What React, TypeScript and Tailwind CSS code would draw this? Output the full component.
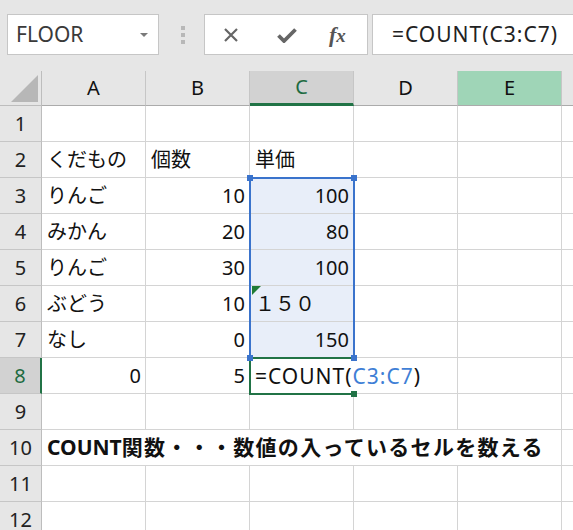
import React from "react";

const FONT = "font-['Noto_Sans','Noto_Sans_CJK_JP',sans-serif]";

type CellProps = {
  children?: React.ReactNode;
  right?: boolean;
  sel?: boolean;
  className?: string;
};

function Cell({ children, right, sel, className = "" }: CellProps) {
  return (
    <div
      className={`h-[36px] w-[104px] shrink-0 border-r border-b border-[#d4d4d4] flex items-center text-[20px] leading-[20px] text-[#111] ${
        right ? "justify-end pr-[4px]" : "justify-start pl-[5px]"
      } ${sel ? "bg-[#e8eef9]" : "bg-white"} ${className}`}
    >
      {children}
    </div>
  );
}

function RowHead({ n, active }: { n: number; active?: boolean }) {
  return (
    <div
      className={`h-[36px] w-[42px] shrink-0 border-b border-[#c6c6c6] flex items-center justify-center text-[20px] leading-[20px] ${
        active
          ? "bg-[#d2d2d2] text-[#1e6b41] border-r-[2px] border-r-[#217346]"
          : "bg-[#e6e6e6] text-[#222] border-r border-r-[#bdbdbd]"
      }`}
    >
      {n}
    </div>
  );
}

function Filler() {
  return <div className="h-[36px] flex-1 border-b border-[#d4d4d4] bg-white" />;
}

export default function App() {
  const dataRows: [string, string, string, boolean?][] = [
    ["りんご", "10", "100"],
    ["みかん", "20", "80"],
    ["りんご", "30", "100"],
    ["ぶどう", "10", "１５０", true],
    ["なし", "0", "150"],
  ];

  return (
    <div className={`relative w-[573px] h-[530px] overflow-hidden bg-white ${FONT}`}>
      {/* Formula bar area */}
      <div className="h-[71px] bg-[#e6e6e6] flex items-start pt-[14px] pl-[7px]">
        <div className="w-[152px] h-[41px] shrink-0 bg-white border border-[#c6c6c6] flex items-center pl-[8px] pr-[10px]">
          <span className="flex-1 text-[21px] text-[#3a3a3a] leading-none">FLOOR</span>
          <span className="w-0 h-0 border-l-[4px] border-r-[4px] border-t-[4px] border-l-transparent border-r-transparent border-t-[#7a7a7a]" />
        </div>
        <div className="w-[45px] h-[41px] shrink-0 flex flex-col items-center justify-center gap-[3px] pl-[2px]">
          <span className="w-[4px] h-[4px] bg-[#b8b8b8]" />
          <span className="w-[4px] h-[4px] bg-[#b8b8b8]" />
          <span className="w-[4px] h-[4px] bg-[#b8b8b8]" />
        </div>
        <div className="w-[164px] h-[41px] shrink-0 bg-white border border-[#c6c6c6] flex items-center pl-[18px]">
          <svg width="16" height="16" viewBox="0 0 16 16">
            <path d="M2 2 L14 14 M14 2 L2 14" stroke="#666" strokeWidth="2.2" fill="none" />
          </svg>
          <svg className="ml-[38px]" width="20" height="16" viewBox="0 0 20 16">
            <path d="M1.5 8.5 L7 14 L18.5 2.5" stroke="#666" strokeWidth="3.8" fill="none" strokeLinejoin="miter" />
          </svg>
          <span className="ml-[32px] font-['Liberation_Serif',serif] italic font-bold text-[22px] text-[#555] leading-none">
            f<span className="text-[19px]">x</span>
          </span>
        </div>
        <div className="ml-[4px] w-[220px] h-[41px] shrink-0 bg-white border border-[#c6c6c6] flex items-center pl-[19px]">
          <span className="text-[21px] tracking-[1px] text-[#222] leading-none whitespace-nowrap">=COUNT(C3:C7)</span>
        </div>
      </div>

      {/* Grid */}
      <div className="relative">
        {/* Column headers */}
        <div className="flex h-[35px]">
          <div className="w-[42px] h-[35px] shrink-0 bg-[#e6e6e6] border-r border-b border-[#bdbdbd] flex items-end justify-end pr-[3px] pb-[3px]">
            <svg width="27" height="27" viewBox="0 0 27 27">
              <path d="M27 0 L27 27 L0 27 Z" fill="#b7b7b7" />
            </svg>
          </div>
          {["A", "B", "C", "D", "E"].map((c) => (
            <div
              key={c}
              className={`w-[104px] h-[35px] shrink-0 border-r flex items-center justify-center text-[20px] leading-[20px] ${
                c === "C"
                  ? "bg-[#d2d2d2] border-r-[#c6c6c6] border-b-[3px] border-b-[#217346] text-[#1e6b41]"
                  : c === "E"
                  ? "bg-[#9fd5b7] border-r-[#c6c6c6] border-b border-b-[#ababab] text-[#111]"
                  : "bg-[#e6e6e6] border-r-[#c6c6c6] border-b border-b-[#ababab] text-[#111]"
              }`}
            >
              {c}
            </div>
          ))}
          <div className="flex-1 h-[35px] bg-[#e6e6e6] border-b border-[#ababab]" />
        </div>

        {/* Row 1 */}
        <div className="flex">
          <RowHead n={1} />
          <Cell />
          <Cell />
          <Cell />
          <Cell />
          <Cell />
          <Filler />
        </div>

        {/* Row 2 */}
        <div className="flex">
          <RowHead n={2} />
          <Cell>くだもの</Cell>
          <Cell>個数</Cell>
          <Cell>単価</Cell>
          <Cell />
          <Cell />
          <Filler />
        </div>

        {dataRows.map(([a, b, c, text], i) => (
          <div className="flex" key={i}>
            <RowHead n={i + 3} />
            <Cell>{a}</Cell>
            <Cell right>{b}</Cell>
            <Cell right={!text} sel className="relative">
              {text && (
                <svg className="absolute left-[2px] top-0" width="9" height="9" viewBox="0 0 9 9">
                  <path d="M0 0 L9 0 L0 9 Z" fill="#1f7a35" />
                </svg>
              )}
              {c}
            </Cell>
            <Cell />
            <Cell />
            <Filler />
          </div>
        ))}

        {/* Row 8 */}
        <div className="flex">
          <RowHead n={8} active />
          <Cell right>0</Cell>
          <Cell right>5</Cell>
          <div className="h-[36px] w-[104px] shrink-0 border-b border-[#d4d4d4] bg-white flex items-center pl-[5px] text-[21px] tracking-[1px] leading-[20px] whitespace-nowrap relative z-10">
            <span className="text-[#111]">=COUNT(</span>
            <span className="text-[#3f7fd6]">C3:C7</span>
            <span className="text-[#111]">)</span>
            <span className="ml-[2px] w-[1.5px] h-[30px] bg-[#111]" />
          </div>
          <Cell />
          <Cell />
          <Filler />
        </div>

        {/* Row 9 */}
        <div className="flex">
          <RowHead n={9} />
          <Cell />
          <Cell />
          <Cell />
          <Cell />
          <Cell />
          <Filler />
        </div>

        {/* Row 10 */}
        <div className="flex">
          <RowHead n={10} />
          <div className="h-[36px] w-[520px] shrink-0 border-r border-b border-[#d4d4d4] bg-white flex items-center pl-[5px] text-[21px] leading-[21px] font-bold text-[#111] whitespace-nowrap">
            COUNT<span className="tracking-[1.3px]">関数・・・数値の入っているセルを数える</span>
          </div>
          <Filler />
        </div>

        {/* Rows 11-12 */}
        {[11, 12].map((n) => (
          <div className="flex" key={n}>
            <RowHead n={n} />
            <Cell />
            <Cell />
            <Cell />
            <Cell />
            <Cell />
            <Filler />
          </div>
        ))}

        {/* Selection range C3:C7 */}
        <div className="absolute left-[249px] top-[106px] w-[106px] h-[182px] border-2 border-[#3a73cc] pointer-events-none z-20" />
        {/* Active cell C8 */}
        <div className="absolute left-[249px] top-[286px] w-[105px] h-[38px] border-2 border-r-0 border-[#217346] pointer-events-none z-20" />
        {/* Handles */}
        <div className="absolute left-[247px] top-[104px] w-[6px] h-[6px] bg-[#3a73cc] z-30" />
        <div className="absolute left-[351px] top-[104px] w-[6px] h-[6px] bg-[#3a73cc] z-30" />
        <div className="absolute left-[247px] top-[284px] w-[6px] h-[6px] bg-[#3a73cc] z-30" />
        <div className="absolute left-[351px] top-[284px] w-[6px] h-[6px] bg-[#3a73cc] z-30" />
        <div className="absolute left-[351px] top-[320px] w-[6px] h-[6px] bg-[#217346] z-30" />
      </div>
    </div>
  );
}
